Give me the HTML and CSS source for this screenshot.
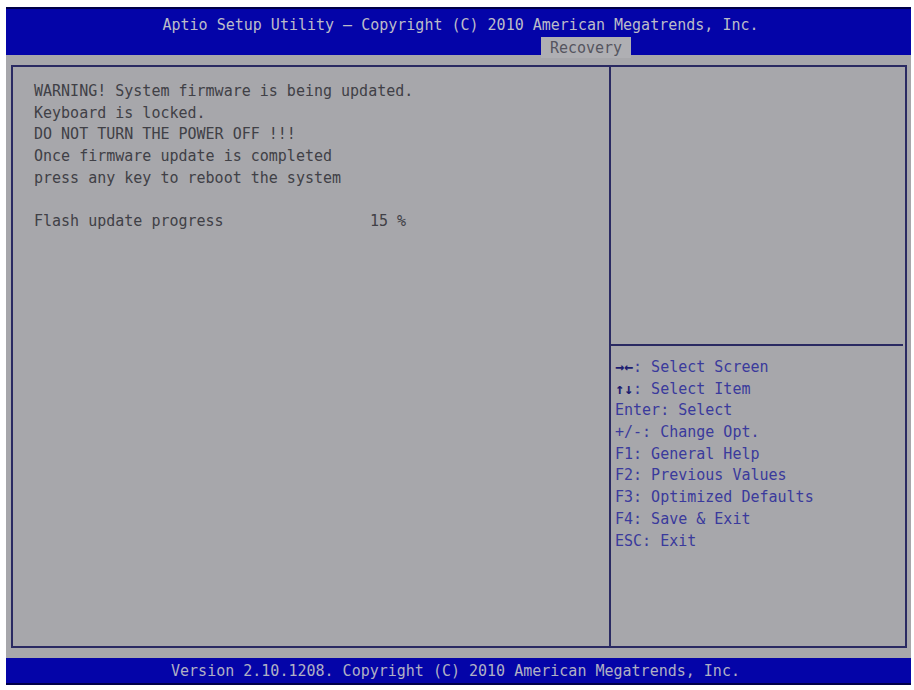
FILE: index.html
```html
<!DOCTYPE html>
<html>
  <head>
    <meta charset="UTF-8">
    <title>Aptio Setup Utility</title>
    <link rel="stylesheet" href="styles.css">
  </head>
  <body>
    <div class="screen">
      <!-- Top title bar with the active tab -->
      <div class="topbar">
        <div class="title">Aptio Setup Utility – Copyright (C) 2010 American Megatrends, Inc.</div>
        <div class="tabs">
          <span class="tab active">Recovery</span>
        </div>
      </div>

      <div class="body">
        <div class="frame">
          <!-- Main panel: flash status -->
          <div class="main">
            <div class="line">WARNING! System firmware is being updated.</div>
            <div class="line">Keyboard is locked.</div>
            <div class="line">DO NOT TURN THE POWER OFF !!!</div>
            <div class="line">Once firmware update is completed</div>
            <div class="line">press any key to reboot the system</div>
            <div class="line blank"></div>
            <div class="line item">
              <span class="item-label">Flash update progress</span>
              <span class="item-value">15 %</span>
            </div>
          </div>

          <!-- Side panel: item help + key legend -->
          <div class="side">
            <div class="help"></div>
            <div class="keys">
              <div class="line"><span class="arrows">→←</span>: Select Screen</div>
              <div class="line"><span class="arrows">↑↓</span>: Select Item</div>
              <div class="line">Enter: Select</div>
              <div class="line">+/-: Change Opt.</div>
              <div class="line">F1: General Help</div>
              <div class="line">F2: Previous Values</div>
              <div class="line">F3: Optimized Defaults</div>
              <div class="line">F4: Save &amp; Exit</div>
              <div class="line">ESC: Exit</div>
            </div>
          </div>
        </div>
      </div>

      <!-- Bottom version bar -->
      <div class="bottombar">Version 2.10.1208. Copyright (C) 2010 American Megatrends, Inc.</div>
    </div>
  </body>
</html>
```

FILE: styles.css
```css
body {
  margin: 0;
  background: white;
  font-family: "DejaVu Sans Mono", "Liberation Mono", monospace;
  font-size: 15px;
}
.screen {
  width: 905px;
  margin: 7px 0 0 6px;
  background: #a7a7ab;
}
.topbar {
  height: 46px;
  background: #0404a8;
  border-top: 2px solid #00004a;
  display: flex;
  flex-direction: column;
}
.title {
  height: 24px;
  padding: 4px 0 0 4px;
  line-height: 24px;
  text-align: center;
  color: #bcbcc8;
}
.tabs {
  display: flex;
  padding-left: 535px;
  margin-top: auto;
}
.tab {
  width: 90px;
  height: 21px;
  line-height: 23px;
  text-align: center;
  color: #55555f;
}
.tab.active {
  background: #afafb3;
}
.body {
  padding: 10px 4px 10px 5px;
}
.frame {
  height: 579px;
  border: 2px solid #2a2a62;
  display: flex;
}
.line {
  height: 21.7px;
  line-height: 21.7px;
  white-space: nowrap;
}
.main {
  width: 575px;
  padding: 14px 0 0 21px;
  border-right: 2px solid #2a2a62;
  color: #404046;
}
.item {
  display: flex;
}
.item-label {
  width: 336px;
}
.side {
  flex: 1;
  display: flex;
  flex-direction: column;
}
.help {
  height: 277px;
  border-bottom: 2px solid #2a2a62;
  margin-right: 2px;
}
.keys {
  padding: 11px 0 0 4px;
  color: #3a3a9c;
}
.arrows {
  color: #1c1c70;
  font-weight: bold;
}
.bottombar {
  height: 25px;
  line-height: 26px;
  background: #0404a8;
  border-bottom: 2px solid #00004a;
  color: #b0b0c4;
  text-align: center;
  padding-right: 6px;
}
```
